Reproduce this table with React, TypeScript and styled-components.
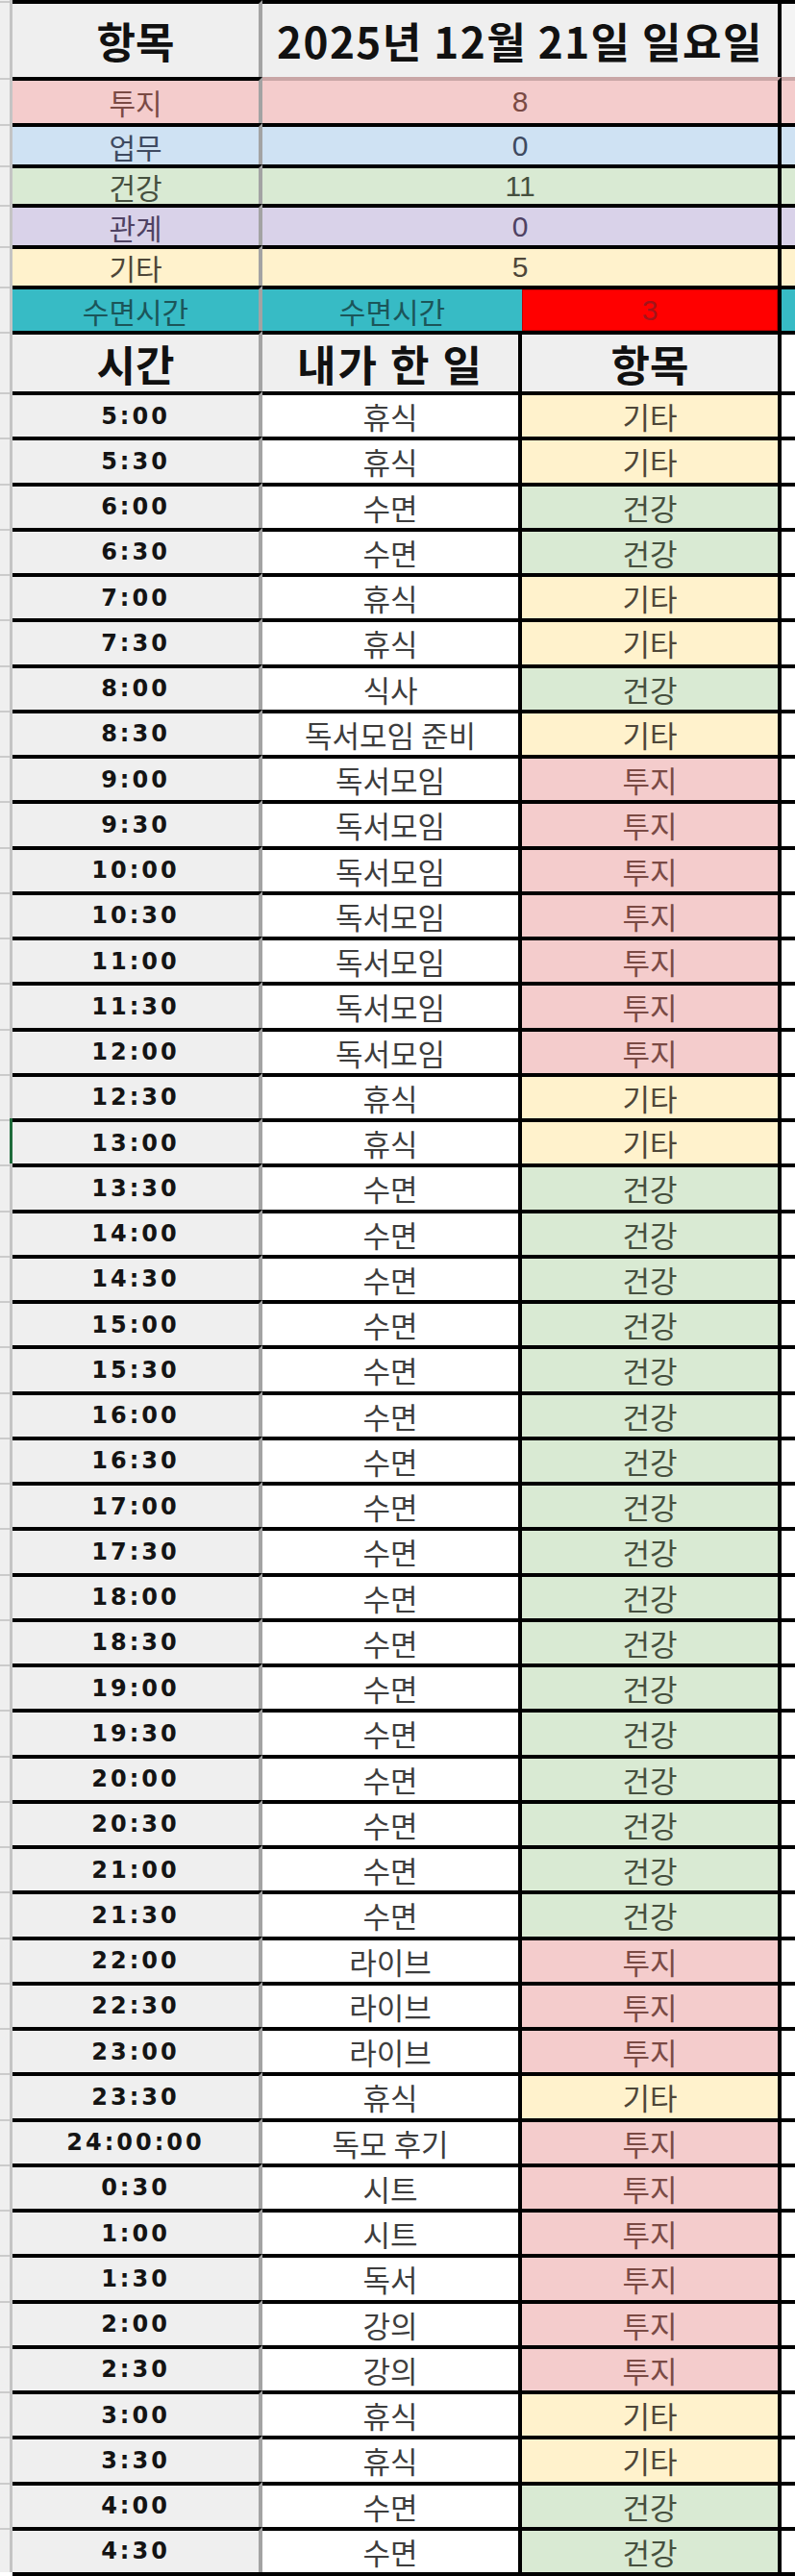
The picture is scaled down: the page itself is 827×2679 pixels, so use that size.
import styled, { createGlobalStyle } from "styled-components";

const GlobalStyle = createGlobalStyle`
  * { box-sizing: border-box; }
  body {
    margin: 0;
    background: #ffffff;
  }
`;

type Category = "투지" | "업무" | "건강" | "관계" | "기타";

const palette: Record<Category, { bg: string; fg: string }> = {
  투지: { bg: "#f4cccc", fg: "#7a4a44" },
  업무: { bg: "#cfe2f3", fg: "#3e4a60" },
  건강: { bg: "#d9ead3", fg: "#46503f" },
  관계: { bg: "#d9d2e9", fg: "#4f4263" },
  기타: { bg: "#fff2cc", fg: "#4e4638" },
};

const TEAL = "#37bbc5";
const HEAD_BG = "#efefef";

const summary: { label: Category; value: number; h: number }[] = [
  { label: "투지", value: 8, h: 48 },
  { label: "업무", value: 0, h: 43 },
  { label: "건강", value: 11, h: 41 },
  { label: "관계", value: 0, h: 43 },
  { label: "기타", value: 5, h: 42 },
];

const log: [string, string, Category][] = [
  ["5:00", "휴식", "기타"],
  ["5:30", "휴식", "기타"],
  ["6:00", "수면", "건강"],
  ["6:30", "수면", "건강"],
  ["7:00", "휴식", "기타"],
  ["7:30", "휴식", "기타"],
  ["8:00", "식사", "건강"],
  ["8:30", "독서모임 준비", "기타"],
  ["9:00", "독서모임", "투지"],
  ["9:30", "독서모임", "투지"],
  ["10:00", "독서모임", "투지"],
  ["10:30", "독서모임", "투지"],
  ["11:00", "독서모임", "투지"],
  ["11:30", "독서모임", "투지"],
  ["12:00", "독서모임", "투지"],
  ["12:30", "휴식", "기타"],
  ["13:00", "휴식", "기타"],
  ["13:30", "수면", "건강"],
  ["14:00", "수면", "건강"],
  ["14:30", "수면", "건강"],
  ["15:00", "수면", "건강"],
  ["15:30", "수면", "건강"],
  ["16:00", "수면", "건강"],
  ["16:30", "수면", "건강"],
  ["17:00", "수면", "건강"],
  ["17:30", "수면", "건강"],
  ["18:00", "수면", "건강"],
  ["18:30", "수면", "건강"],
  ["19:00", "수면", "건강"],
  ["19:30", "수면", "건강"],
  ["20:00", "수면", "건강"],
  ["20:30", "수면", "건강"],
  ["21:00", "수면", "건강"],
  ["21:30", "수면", "건강"],
  ["22:00", "라이브", "투지"],
  ["22:30", "라이브", "투지"],
  ["23:00", "라이브", "투지"],
  ["23:30", "휴식", "기타"],
  ["24:00:00", "독모 후기", "투지"],
  ["0:30", "시트", "투지"],
  ["1:00", "시트", "투지"],
  ["1:30", "독서", "투지"],
  ["2:00", "강의", "투지"],
  ["2:30", "강의", "투지"],
  ["3:00", "휴식", "기타"],
  ["3:30", "휴식", "기타"],
  ["4:00", "수면", "건강"],
  ["4:30", "수면", "건강"],
];

const Sheet = styled.div`
  width: 827px;
  font-family: "Noto Sans CJK KR", "Noto Sans", sans-serif;
`;

const Row = styled.div<{ $h: number }>`
  display: grid;
  grid-template-columns: 13px 260px 270px 270px 14px;
  height: ${(p) => p.$h}px;
`;

const Gutter = styled.div<{ $selected?: boolean }>`
  position: relative;
  background: #efefef;
  border-right: 3px solid ${(p) => (p.$selected ? "#1f6b3b" : "#c4c4c4")};

  &::before {
    content: "";
    position: absolute;
    top: 1px;
    left: 0;
    width: 10px;
    height: 2px;
    background: #cbcbcb;
  }
`;

const Cell = styled.div<{
  $bg: string;
  $right?: string;
  $span?: number;
  $top?: string;
  $outline?: string;
}>`
  display: flex;
  align-items: center;
  justify-content: center;
  white-space: nowrap;
  background: ${(p) => p.$bg};
  grid-column: span ${(p) => p.$span ?? 1};
  border-top: 4px solid ${(p) => p.$top ?? "#000"};
  border-right: ${(p) => (p.$right ? `4px solid ${p.$right}` : "none")};
  box-shadow: ${(p) => (p.$outline ? `inset 0 0 0 1px ${p.$outline}` : "none")};
`;

const HeadText = styled.span<{ $spacing?: number }>`
  font-size: 44px;
  font-weight: 700;
  line-height: 1;
  letter-spacing: ${(p) => p.$spacing ?? 0}px;
  color: #111111;
`;

const LabelText = styled.span<{ $color: string }>`
  font-size: 30px;
  line-height: 1;
  color: ${(p) => p.$color};
`;

const NumText = styled.span<{ $color: string }>`
  font-family: "Liberation Sans", Arial, sans-serif;
  font-size: 30px;
  line-height: 1;
  color: ${(p) => p.$color};
`;

const TimeText = styled.span`
  font-family: "DejaVu Sans", sans-serif;
  font-weight: 700;
  font-size: 24px;
  letter-spacing: 3px;
  line-height: 1;
  color: #141414;
`;

const BodyText = styled.span<{ $color?: string }>`
  font-size: 31px;
  line-height: 1;
  color: ${(p) => p.$color ?? "#3d3d3d"};
`;

const BottomLine = styled.div`
  margin-left: 13px;
  height: 4px;
  background: #000000;
`;

function App() {
  return (
    <Sheet>
      <GlobalStyle />

      <Row $h={80}>
        <Gutter />
        <Cell $bg={HEAD_BG} $right="#a3a3a3">
          <HeadText>항목</HeadText>
        </Cell>
        <Cell $bg={HEAD_BG} $span={2} $right="#000">
          <HeadText $spacing={1.5}>2025년 12월 21일 일요일</HeadText>
        </Cell>
        <Cell $bg="#f4f4f4" />
      </Row>

      {summary.map((s, i) => {
        const c = palette[s.label];
        const top = i === 0 ? "#c9a6a6" : "#000";
        return (
          <Row key={s.label} $h={s.h}>
            <Gutter />
            <Cell $bg={c.bg} $right="#a3a3a3">
              <LabelText $color={c.fg}>{s.label}</LabelText>
            </Cell>
            <Cell $bg={c.bg} $span={2} $right="#000" $top={top}>
              <NumText $color={c.fg}>{s.value}</NumText>
            </Cell>
            <Cell $bg={c.bg} $top={top} />
          </Row>
        );
      })}

      <Row $h={47}>
        <Gutter />
        <Cell $bg={TEAL} $right="#a3a3a3">
          <LabelText $color="#1b5559">수면시간</LabelText>
        </Cell>
        <Cell $bg={TEAL}>
          <LabelText $color="#1b5559">수면시간</LabelText>
        </Cell>
        <Cell $bg="#ff0000" $right="#000" $outline="#c40000">
          <NumText $color="#a3141a">3</NumText>
        </Cell>
        <Cell $bg={TEAL} />
      </Row>

      <Row $h={63}>
        <Gutter />
        <Cell $bg={HEAD_BG} $right="#a3a3a3">
          <HeadText>시간</HeadText>
        </Cell>
        <Cell $bg={HEAD_BG} $right="#000">
          <HeadText $spacing={2}>내가 한 일</HeadText>
        </Cell>
        <Cell $bg={HEAD_BG} $right="#000">
          <HeadText>항목</HeadText>
        </Cell>
        <Cell $bg="#ffffff" />
      </Row>

      {log.map(([time, what, cat], i) => (
        <Row key={time + i} $h={47.25}>
          <Gutter $selected={time === "13:00"} />
          <Cell $bg={HEAD_BG} $right="#a3a3a3">
            <TimeText>{time}</TimeText>
          </Cell>
          <Cell $bg="#ffffff" $right="#000">
            <BodyText>{what}</BodyText>
          </Cell>
          <Cell $bg={palette[cat].bg} $right="#000">
            <BodyText $color={palette[cat].fg}>{cat}</BodyText>
          </Cell>
          <Cell $bg="#ffffff" />
        </Row>
      ))}

      <BottomLine />
    </Sheet>
  );
}

export default App;
